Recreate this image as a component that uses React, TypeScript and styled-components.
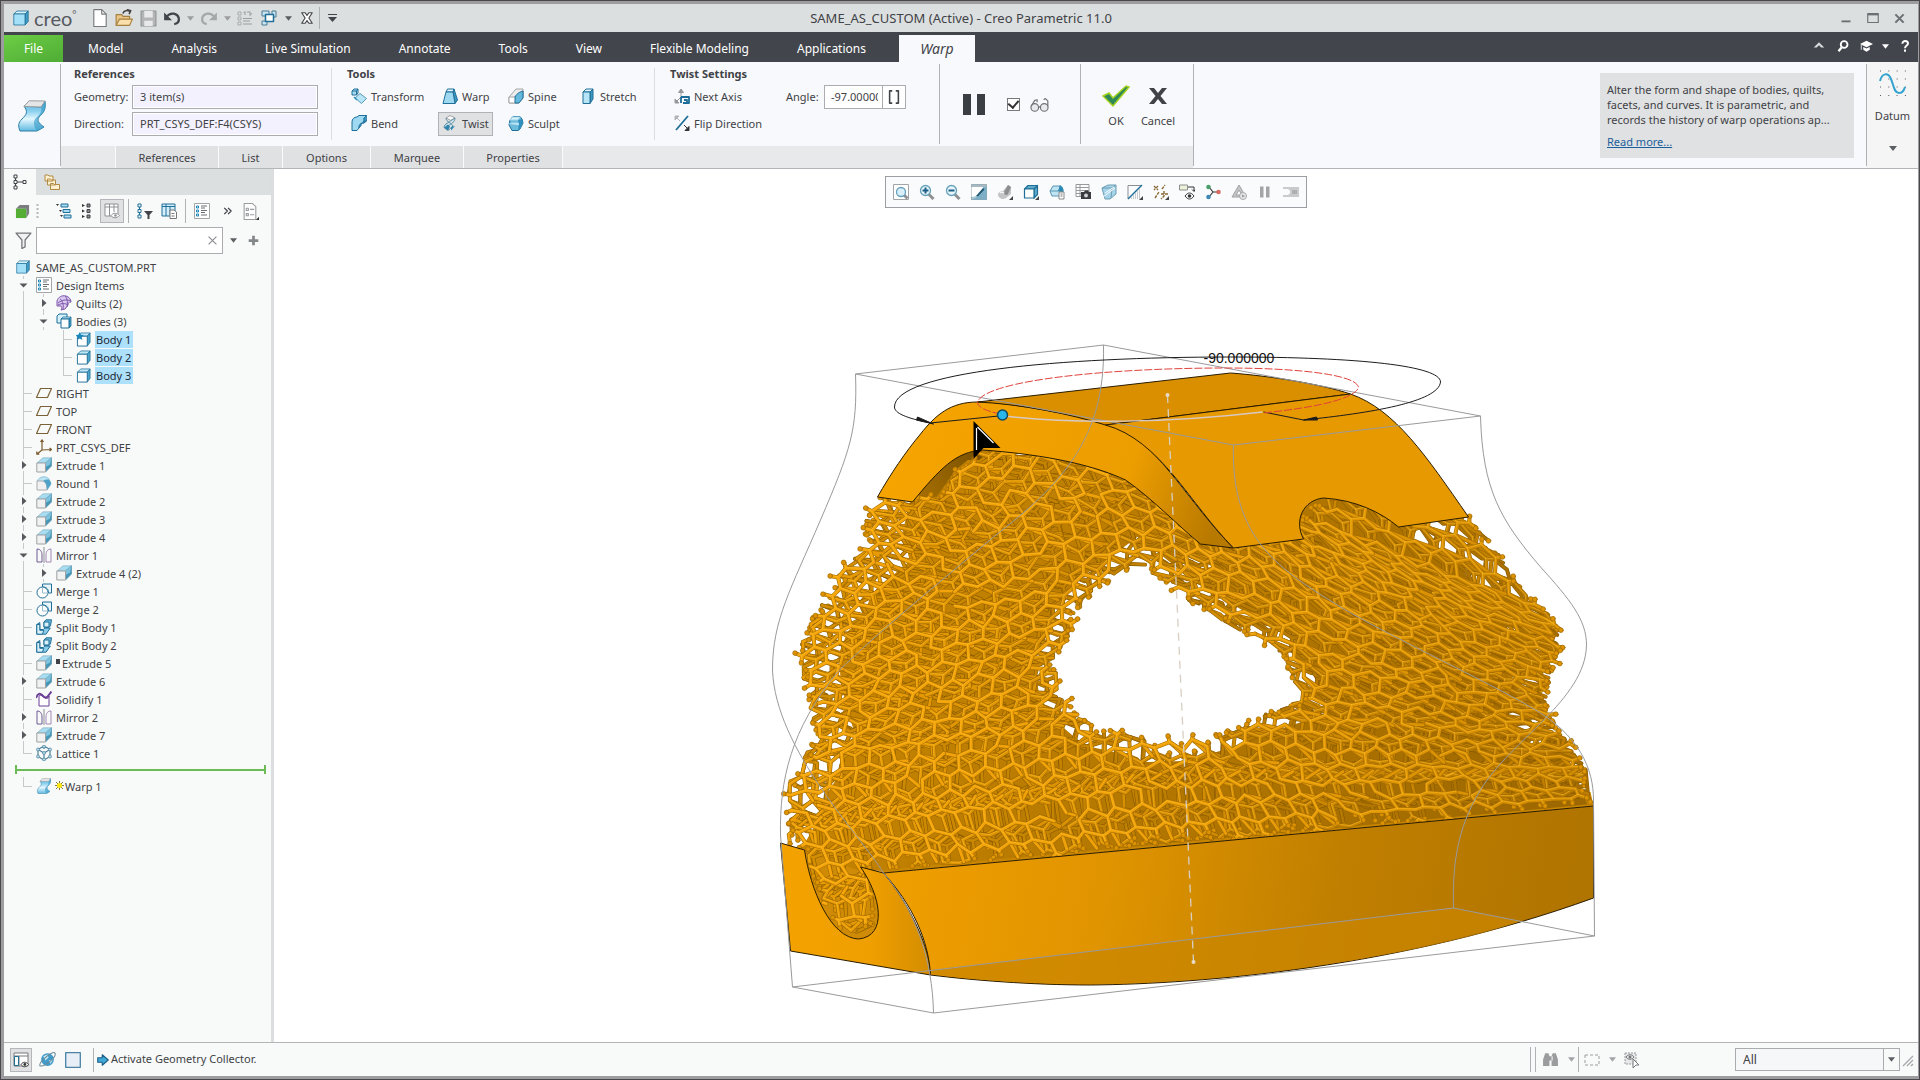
import React from "react";
import styled, { createGlobalStyle, css } from "styled-components";

const Global = createGlobalStyle`
  * { box-sizing: border-box; }
  html, body, #root { height: 100%; margin: 0; }
  body { font-family: "Noto Sans", "Open Sans", sans-serif; font-size: 11px; color: #3f4246; background: #fff; overflow: hidden; }
  button, input, select { font: inherit; color: inherit; }
  button { background: none; border: 0; padding: 0; margin: 0; }
  svg { display: block; flex: none; }
`;

/* ---------- layout ---------- */

const Window = styled.div`
  height: 100vh;
  display: flex;
  flex-direction: column;
  border: 4px solid #9d9c9f;
  border-right-width: 2px;
  outline: 1px solid #4a474c;
  outline-offset: -1px;
`;

const TitleBar = styled.header`
  height: 28px;
  flex: none;
  display: grid;
  grid-template-columns: 1fr auto 1fr;
  align-items: center;
  background: #dcdfe0;
`;

const QuickAccess = styled.div`
  display: flex;
  align-items: center;
  padding-left: 9px;
`;

const Brand = styled.span`
  font-family: "Lato", sans-serif;
  font-size: 20px;
  line-height: 24px;
  width: 59px;
  padding-left: 5px;
  color: #55595f;
`;

const BrandMark = styled.sup`
  font-size: 10px;
  line-height: 10px;
`;

const TitleText = styled.h1`
  margin: 0;
  font-size: 13px;
  font-weight: 400;
  line-height: 20px;
`;

const QuickButton = styled.button<{ $w?: number }>`
  width: ${(p) => p.$w ?? 24}px;
  height: 24px;
  display: flex;
  align-items: center;
  justify-content: center;
`;

const WindowButtons = styled.div`
  display: flex;
  justify-content: flex-end;
  padding-right: 5px;
`;

const TabBar = styled.nav`
  height: 30px;
  flex: none;
  display: flex;
  align-items: flex-end;
  background: #42454c;
`;

const Tab = styled.button<{ $kind?: "file" | "active" }>`
  height: 27px;
  padding: 0 23px;
  color: #fff;
  font-size: 12px;
  line-height: 20px;
  white-space: nowrap;
  & + & { margin-left: 2px; }
  ${(p) => p.$kind === "file" && css`
    background: linear-gradient(160deg, #6cce45, #4fab35);
    width: 59px;
    padding: 0;
  `}
  ${(p) => p.$kind === "active" && css`
    background: #f8f9fc;
    color: #3f4246;
    font-style: italic;
    font-size: 14px;
    width: 76px;
    padding: 0;
    && { margin-left: 10px; }
  `}
`;

const TabTools = styled.div`
  margin-left: auto;
  height: 27px;
  display: flex;
  align-items: center;
  padding: 0 1px 5px 0;
`;

const Ribbon = styled.section`
  height: 107px;
  flex: none;
  display: flex;
  background: #f8f9fc;
  border-bottom: 1px solid #b4b5b8;
`;

const RibbonIcon = styled.div`
  width: 56px;
  display: flex;
  align-items: center;
  justify-content: center;
  padding-top: 1px;
`;

const Divider = styled.span<{ $top?: number; $bottom?: number; $color?: string }>`
  flex: none;
  width: 1px;
  align-self: stretch;
  margin: ${(p) => p.$top ?? 2}px 0 ${(p) => p.$bottom ?? 2}px;
  background: ${(p) => p.$color ?? "#b0b1b5"};
`;

const Spacer = styled.span<{ $w: number }>`
  width: ${(p) => p.$w}px;
  flex: none;
`;

const Dashboard = styled.div`
  display: flex;
  flex-direction: column;
`;

const Groups = styled.div`
  height: 84px;
  display: flex;
`;

const Group = styled.div<{ $left: number; $right: number }>`
  display: flex;
  flex-direction: column;
  gap: 3px;
  padding: 4px ${(p) => p.$right}px 0 ${(p) => p.$left}px;
`;

const GroupTitle = styled.h2`
  margin: 0;
  font-size: 11px;
  line-height: 16px;
  font-weight: 700;
`;

const Row = styled.div`
  display: flex;
  align-items: center;
  height: 24px;
`;

const FieldLabel = styled.label<{ $w: number }>`
  width: ${(p) => p.$w}px;
  padding-bottom: 2px;
`;

const Field = styled.input`
  width: 186px;
  height: 24px;
  border: 1px solid #abacb0;
  background: #f3f1fd;
  box-shadow: inset 0 0 0 1px #fff;
  padding: 0 7px 2px;
  outline: 0;
`;

const ToolGrid = styled.div`
  display: grid;
  grid-template-columns: 91px 66px 72px 64px;
  grid-auto-rows: 24px;
  row-gap: 3px;
  justify-items: start;
`;

const ToolButton = styled.button<{ $on?: boolean; $w?: number }>`
  height: 24px;
  display: flex;
  align-items: center;
  gap: 4px;
  padding: 0 3px 2px;
  white-space: nowrap;
  width: ${(p) => (p.$w ? `${p.$w}px` : "auto")};
  border: 1px solid ${(p) => (p.$on ? "#b1b2b5" : "transparent")};
  background: ${(p) => (p.$on ? "#e0e1e3" : "transparent")};
`;

const AngleBox = styled.span`
  display: flex;
  width: 82px;
  height: 24px;
  border: 1px solid #abacb0;
  background: #fff;
`;

const AngleInput = styled.input`
  flex: 1;
  min-width: 0;
  border: 0;
  padding: 0 4px 2px 6px;
  outline: 0;
`;

const AngleButton = styled.button`
  width: 23px;
  border-left: 1px solid #abacb0;
  display: flex;
  align-items: center;
  justify-content: center;
`;

const Playback = styled.div`
  display: flex;
  align-items: center;
  gap: 10px;
  width: 140px;
  padding-left: 23px;
`;

const CheckInput = styled.input`
  appearance: none;
  width: 13px;
  height: 13px;
  margin: 0 0 0 12px;
  border: 1px solid #77797d;
  background: #fff;
  display: grid;
  place-content: center;
  &:checked::before {
    content: "";
    width: 5px;
    height: 8px;
    border: solid #333;
    border-width: 0 2px 2px 0;
    transform: rotate(40deg);
    margin-bottom: 2px;
  }
`;

const Confirm = styled.div`
  display: flex;
  justify-content: center;
  width: 112px;
`;

const ConfirmButton = styled.button`
  width: 42px;
  display: flex;
  flex-direction: column;
  align-items: center;
  padding-top: 22px;
  gap: 5px;
  line-height: 16px;
`;

const SubTabs = styled.div`
  display: flex;
  height: 22px;
  background: #e8e9eb;
`;

const SubTab = styled.button<{ $w: number }>`
  width: ${(p) => p.$w}px;
  border-right: 1px solid #fafafa;
  background: #e0e1e3;
`;

const SubPad = styled.span`
  width: 55px;
  border-right: 1px solid #fafafa;
`;

const Help = styled.aside`
  width: 254px;
  height: 85px;
  margin: 11px 12px 0 auto;
  padding: 9px 7px;
  background: #e0e1e2;
  line-height: 15px;
`;

const HelpText = styled.p`
  margin: 0 0 7px;
  white-space: nowrap;
`;

const HelpLink = styled.a`
  color: #1b5e9b;
  text-decoration: underline;
`;

const Datum = styled.button`
  width: 51px;
  display: flex;
  flex-direction: column;
  align-items: center;
  background: #f5f5f6;
  padding-top: 8px;
  line-height: 16px;
  gap: 11px;
`;

const Main = styled.main`
  flex: 1;
  min-height: 0;
  display: flex;
`;

const Navigator = styled.aside`
  width: 270px;
  flex: none;
  display: flex;
  flex-direction: column;
  background: #f8faf9;
  border-right: 3px solid #dcdddf;
`;

const NavTabs = styled.div`
  display: flex;
  height: 26px;
  flex: none;
  background: #dcdfe0;
`;

const NavTab = styled.button<{ $on?: boolean }>`
  width: 32px;
  display: flex;
  align-items: center;
  justify-content: center;
  background: ${(p) => (p.$on ? "#f8faf9" : "transparent")};
`;

const NavTools = styled.div`
  display: flex;
  align-items: center;
  height: 32px;
  padding-left: 8px;
`;

const NavButton = styled.button<{ $on?: boolean; $w?: number }>`
  width: ${(p) => p.$w ?? 24}px;
  flex: none;
  height: 24px;
  display: flex;
  align-items: center;
  justify-content: center;
  border: 1px solid ${(p) => (p.$on ? "#b5b6b9" : "transparent")};
  background: ${(p) => (p.$on ? "#e0e1e2" : "transparent")};
`;

const FilterRow = styled.div`
  display: flex;
  align-items: center;
  height: 27px;
  padding-left: 11px;
`;

const FilterBox = styled.div`
  display: flex;
  align-items: center;
  width: 187px;
  height: 27px;
  margin-left: 4px;
  padding-right: 5px;
  border: 1px solid #abacb0;
  background: #fff;
`;

const FilterInput = styled.input`
  flex: 1;
  min-width: 0;
  border: 0;
  background: none;
  outline: 0;
`;

const TreeList = styled.ul<{ $top?: number }>`
  list-style: none;
  margin: ${(p) => p.$top ?? 4}px 0 0;
  padding: 0 0 0 12px;
`;

const TreeRow = styled.li`
  display: flex;
  align-items: center;
  height: 18px;
  line-height: 17px;
`;

const Guide = styled.span<{ $kind: string }>`
  width: 20px;
  height: 18px;
  flex: none;
  display: flex;
  align-items: center;
  padding-left: 3px;
  background-repeat: no-repeat;
  ${(p) => p.$kind === "|" && css`
    background-image: linear-gradient(#c6c8ca, #c6c8ca);
    background-size: 1px 18px;
    background-position: 7px 0;
  `}
  ${(p) => (p.$kind === "T" || p.$kind === "L") && css`
    background-image: linear-gradient(#c6c8ca, #c6c8ca), linear-gradient(#c6c8ca, #c6c8ca);
    background-size: 1px ${p.$kind === "T" ? 18 : 9}px, 9px 1px;
    background-position: 7px 0, 7px 9px;
  `}
  ${(p) => (p.$kind === ">" || p.$kind === "v") && css`
    background-image: linear-gradient(#c6c8ca 3px, transparent 3px, transparent 15px, #c6c8ca 15px);
    background-size: 1px 18px;
    background-position: 7px 0;
  `}
`;

const TreeIcon = styled.span`
  width: 19px;
  flex: none;
`;

const TreeLabel = styled.span<{ $on?: boolean }>`
  padding: 0 2px 0 1px;
  background: ${(p) => (p.$on ? "#ade0fb" : "transparent")};
  color: ${(p) => (p.$on ? "#1d2a36" : "inherit")};
`;

const InsertBar = styled.div`
  height: 9px;
  margin: 3px 5px 3px 11px;
  border: solid #6cbb57;
  border-width: 0 2px;
  background: linear-gradient(#6cbb57, #6cbb57) center / 100% 2px no-repeat;
`;

const Viewport = styled.section`
  flex: 1;
  min-width: 0;
  display: grid;
  background: #fff;
`;

const Scene = styled.svg`
  grid-area: 1 / 1;
  width: 100%;
  height: 100%;
  min-height: 0;
`;

const ViewTools = styled.div`
  grid-area: 1 / 1;
  justify-self: center;
  align-self: start;
  display: flex;
  margin-top: 7px;
  padding: 0 2px;
  border: 1px solid #9c9ea3;
  background: #fafbfd;
`;

const ViewButton = styled.button`
  width: 26px;
  height: 30px;
  display: flex;
  align-items: center;
  justify-content: center;
`;

const StatusBar = styled.footer`
  height: 34px;
  flex: none;
  display: flex;
  align-items: center;
  padding: 0 4px 0 6px;
  border-top: 1px solid #b4b5b8;
  background: #f8faf9;
`;

const StatusText = styled.span`
  padding: 0 0 2px 2px;
  flex: 1;
`;

const SelectBox = styled.div`
  display: flex;
  width: 165px;
  height: 23px;
  margin-left: 90px;
  border: 1px solid #abacb0;
  align-items: center;
`;

const Select = styled.select`
  appearance: none;
  flex: 1;
  height: 21px;
  border: 0;
  border-right: 1px solid #abacb0;
  background: #f6f7f8;
  padding: 0 7px;
  font-size: 12px;
  outline: 0;
`;

const SelectArrow = styled.span`
  width: 15px;
  display: flex;
  justify-content: center;
`;

/* ---------- icons ---------- */

const B = "#1f6f98";
const L = "#a9dcf3";
const G = "#6c6f73";

const Svg = ({ s = 16, children }: { s?: number; children: React.ReactNode }) => (
  <svg width={s} height={s} viewBox="0 0 16 16" fill="none" strokeLinejoin="round" aria-hidden="true">{children}</svg>
);

const Caret = ({ c = "#5b5e62", s = 8 }: { c?: string; s?: number }) => (
  <svg width={s} height="5" viewBox="0 0 8 5" aria-hidden="true"><path d="M0 0h8L4 5z" fill={c} /></svg>
);

const IcCube = ({ s = 16 }) => (
  <Svg s={s}>
    <path d="M.8 4 4 1h11.200l-3.200 3z" fill="#d4f1fc" stroke={B} strokeWidth=".8" />
    <path d="M12 4l3.200-3v10.500L12 15z" fill="#3f9cc4" stroke={B} strokeWidth=".8" />
    <path d="M.8 4H12v11H.8z" fill="#a5e0f9" stroke={B} strokeWidth=".8" />
  </Svg>
);

const IcBody = ({ star = false }) => (
  <Svg s={15}>
    <path d="M1.500 4.500 5 1h10l-3 3.500z" fill="#bfe9f8" stroke={B} strokeWidth=".8" />
    <path d="M12 4.500 15 1v10l-3 4z" fill="#4ba6cb" stroke={B} strokeWidth=".8" />
    <path d="M1.500 4.500H12V15H1.500z" fill="#fff" stroke={B} />
    {star && <path d="M4 0l1.300 2.900 3.200.3-2.400 2.100.7 3.200L4 6.900 1.200 8.500l.7-3.200L-.5 3.200l3.200-.3z" fill="#1b86bb" />}
  </Svg>
);

const IcBodies = () => (
  <Svg>
    <path d="M1 3 3 1h8v9H1z" fill="#d4f1fc" stroke={B} />
    <path d="M5 6l2-2h8l-2 2z" fill="#bfe9f8" stroke={B} strokeWidth=".8" />
    <path d="M13 6l2-2v9l-2 2z" fill="#4ba6cb" stroke={B} strokeWidth=".8" />
    <path d="M5 6h8v9H5z" fill="#fff" stroke={B} />
  </Svg>
);

const IcExtrude = () => (
  <Svg>
    <path d="M1 6 7 .8h8.500L9.500 6z" fill="#a8dcf0" stroke="#7fa8ba" strokeWidth=".6" />
    <path d="M9.500 6l6-5.200V9l-6 6z" fill="#4696b8" stroke="#4c8aa5" strokeWidth=".6" />
    <path d="M9.500 6l6-5.200L14 7.500 9.500 10z" fill="#7fc2dd" />
    <path d="M.8 6h8.700v9H.8z" fill="#f1f1f1" stroke="#9fa1a3" />
  </Svg>
);

const IcRound = () => (
  <Svg>
    <path d="M1 6c3-5 9-5.500 12-2l2 5-4 6" fill="#bde4f3" stroke="#7fb8cf" strokeWidth=".8" />
    <path d="M1 6h6c3 1 4 4 4 9H1z" fill="#f1f1f1" stroke="#aaabad" />
    <path d="M7 6c3 1 4 4 4 9l4-6c0-4-3-6-8-3z" fill="#4fa3c8" />
  </Svg>
);

const IcQuilt = () => (
  <Svg>
    <path d="M1 6c1-4 5-6 9-5 3 1 5 3 5 6-2 0-3 1-3 3l-3 4-4 1c1-2 1-3 0-4L1 11z" fill="#d9c8ee" stroke="#7d55ab" />
    <path d="M2 8c4-3 8-4 13-2M4 4c2 1 4 5 3 10M9 1c2 2 3 5 2 11M2 10c4-2 7-2 10 0" stroke="#7d55ab" />
  </Svg>
);

const IcList = () => (
  <Svg>
    <path d="M.5.500h15v15H.5z" fill="#fff" stroke="#a3a5a8" />
    <path d="M2.500 3h2v2h-2zM2.500 7h2v2h-2zM2.500 11h2v2h-2z" fill="#fff" stroke="#1c86b8" />
    <path d="M7 3h6M7 5h4M7 7.500h6M7 9.500h4M7 12h6" stroke={G} />
  </Svg>
);

const IcPlane = () => (
  <Svg><path d="M4.500 3.500h11l-4 9h-11z" stroke="#7a6137" strokeWidth="1.200" /></Svg>
);

const IcCsys = () => (
  <Svg><path d="M6 1v10l9-.5M6 11l-5 4M4.500 3 6 .8 7.500 3M13.500 9l2 1.500-2 1.500M.8 12.500V15.200h2.500" stroke="#7a5a2c" strokeWidth="1.200" /></Svg>
);

const IcMirror = () => (
  <Svg>
    <path d="M1 15V2c3 0 5 2 5 6v7z" stroke="#6d5a94" />
    <path d="M15 15V2c-3 0-5 2-5 6v7z" stroke="#a487b7" />
    <path d="M8 0v16" stroke="#8b8d92" />
  </Svg>
);

const IcMerge = () => (
  <Svg>
    <path d="M6.500 1h9v9h-3c0-4-2-6-6-6z" fill="#e7f5fb" stroke={B} />
    <circle cx="6.500" cy="9.500" r="5.500" fill="#fff" fillOpacity=".8" stroke={B} />
    <path d="M6.500 4v6H12" stroke="#9dbccb" />
  </Svg>
);

const IcSplit = () => (
  <Svg>
    <path d="M.8 5.500l3-2v7h3.500l1.500-1.500h5.500L10 15.200H.8z" fill="#8accea" stroke={B} />
    <path d="M.8 5.500h3v5.800h4L6.500 15.200H.8z" fill="#d8f0fa" stroke={B} />
    <path d="M8 3l2-2.200h5.500l-1 6-1.500 1.500H8z" fill="#6fbadb" stroke={B} />
    <path d="M8 3h5v5H8z" fill="#d8f0fa" stroke={B} />
  </Svg>
);

const IcSolidify = () => (
  <Svg>
    <path d="M3 15V5c2-2 4 1 6 2s4 0 4-2v10z" fill="#fff" stroke="#6b3f97" />
    <path d="M0 7c2-5 4-5 6-3s4 4 6 1l3.500-4.500" stroke="#6b3f97" strokeWidth="2" />
  </Svg>
);

const IcLattice = () => (
  <Svg>
    <path d="M8 1 2 4.500v7L8 15l6-3.500v-7zM2 4.500 8 8l6-3.500M8 8v7M8 1v3" stroke="#4f8299" strokeWidth="1.200" />
    {[[8, 1.5], [2, 4.5], [14, 4.5], [2, 11.5], [14, 11.5], [8, 14.5], [8, 8]].map(([x, y]) => (
      <circle key={`${x}-${y}`} cx={x} cy={y} r="1.500" fill="#b6dceb" stroke="#4f8299" strokeWidth=".7" />
    ))}
  </Svg>
);

const IcWarpBody = ({ s = 16 }) => (
  <svg width={s} height={s} viewBox="-2 0 32 32" fill="none" aria-hidden="true">
    <defs>
      <linearGradient id="wb" x1="0" y1="0" x2="0" y2="1">
        <stop offset="0" stopColor="#4fb0dc" /><stop offset=".35" stopColor="#8fd2f0" /><stop offset=".6" stopColor="#e4f7ff" /><stop offset="1" stopColor="#5fb9e0" />
      </linearGradient>
    </defs>
    <path d="M6 6C10 12 9 14 4 19 0 23 0 26 2 31H19L26 27C20 23 19 20 21 17 26 12 28 10 27 1L23 7Z" fill="url(#wb)" stroke="#2c7fa6" />
    <path d="M23 7C24 13 21 15 17 19 15 23 16 27 19 31L26 27C20 23 19 20 21 17 26 12 28 10 27 1Z" fill="#3a9cc9" opacity=".65" />
    <path d="M6 6.500 11 .8 27 1 23 7Z" fill="#e4e5e6" stroke="#9b9c9e" />
  </svg>
);

const IcTransform = () => (
  <Svg>
    <path d="M1 3l2-2h4v4L5.500 7H1z" fill={L} stroke={B} />
    <path d="M1 3h4.500v4M5.500 3 7 1" stroke={B} />
    <path d="M4 10l5-4.500 6.500 5L10.500 15.500z" fill="#b7e4f6" stroke="#5b9ab5" />
    <path d="M3 9l3 3" stroke="#2d8fbf" strokeWidth="1.500" />
  </Svg>
);
const IcWarp = () => (
  <Svg>
    <path d="M4 4l1.500-3H12l-1 3z" fill="#e4f6fd" stroke={B} />
    <path d="M11 4l1-3 3.500 11L13 15.500z" fill="#3d97bf" stroke={B} />
    <path d="M4 4h7l2 11.500H1z" fill="#9fd9f1" stroke={B} />
  </Svg>
);
const IcSpine = () => (
  <Svg>
    <path d="M1 9 8 1h7v8l-4 6H1z" fill="#ececec" stroke="#a5a6a8" />
    <path d="M1 9h5c2 0 3-3 6-4l3-2v7l-5 5H1z" fill="#fff" stroke="#a5a6a8" />
    <path d="M7 9c2-4 5-5 8-6v7l-4 5H7z" fill="#66b9dc" stroke={B} />
  </Svg>
);
const IcStretch = () => (
  <Svg>
    <path d="M3 4l3-3h7l-3 3z" fill="#e4f6fd" stroke={B} />
    <path d="M10 4l3-3v10l-3 4.500z" fill="#3d97bf" stroke={B} />
    <path d="M3 4h7v11.500H3z" fill="#b7e4f6" stroke={B} />
  </Svg>
);
const IcBend = () => (
  <Svg>
    <path d="M1 7c0-3 2-5 5-5l2-1.500h7.500L13 3v5c-4 0-5 2-5 5l-2 2.500H1z" fill="#9fd9f1" stroke={B} />
    <path d="M13 8l2.500-2V.5L13 3zM8 13c0-3 1-5 5-5l2.500-2c-4 0-5 2-5.500 5z" fill="#3d97bf" stroke={B} strokeWidth=".7" />
  </Svg>
);
const IcTwist = () => (
  <Svg>
    <path d="M4 3l4-2.500L13 3 9 5.500z" fill="#fff" stroke="#9d9ea0" />
    <path d="M4 3c0 4 6 5 7 8l-5 4.500-4-3c0-4 6-5 7-7l4-2.500c0 4-4 6-7 8" fill="#cfe3ec" stroke="#5d8ba0" />
    <path d="M6 15.500 2 12.500l4-3 2 2zM9 12l4-1-4 4.500z" fill="#2e84ad" />
  </Svg>
);
const IcSculpt = () => (
  <Svg>
    <path d="M5 1.500h7l2 2.500 1 4-3 6-2 1.500H4L1 10l1-5z" fill="#6bbbdc" stroke={B} />
    <path d="M2 5h8l2-3H5zM1 9l3-1h7l1 2" fill="#d8f2fc" stroke="#9fd3e8" />
    <path d="M10 5l4-1 1 4-3 6-2 1 1-6z" fill="#2f8fbd" />
  </Svg>
);
const IcNextAxis = () => (
  <Svg>
    <path d="M7 10V2M4.500 4.500 7 1l2.500 3.500zM6 10 2 14M1 11v4h4z" stroke="#96999c" fill="#96999c" />
    <path d="M7 9h8v6H9M7 9v6M10 12h3v3" stroke="#1b6c98" strokeWidth="1.800" />
  </Svg>
);
const IcFlip = () => (
  <Svg>
    <path d="M2 15 14 1" stroke={B} strokeWidth="1.800" />
    <path d="M1 1h4L1 5zM2 2l4 4" fill="#b1b3b5" stroke="#b1b3b5" />
    <path d="M15 15.500h-4l4-4zM14 14l-4-4" fill="#333" stroke="#333" />
  </Svg>
);
const Funnel = ({ s = 16, c = "#74777a" }) => (
  <Svg s={s}><path d="M1 1h14l-5.500 6.500V14l-3 1.500v-8z" fill="#f2f2f2" stroke={c} strokeWidth="1.200" /></Svg>
);
const Glass = ({ sign = "" }) => (
  <Svg>
    <path d="M9.500 10l5 5" stroke="#8f9193" strokeWidth="3" />
    <circle cx="6.500" cy="6.500" r="5" fill="#e8f6fc" stroke="#64a0b9" strokeWidth="1.300" />
    {sign && <path d={sign === "+" ? "M6.500 3.500v6M3.500 6.500h6" : "M3.500 6.500h6"} stroke="#1b5f86" strokeWidth="2" />}
  </Svg>
);

const viewIcons: [string, React.ReactNode][] = [
  ["Refit", <Svg><path d="M.5.500h15v15H.5z" fill="#fff" stroke="#a2a4a8" /><path d="M10.500 10.500l4 4" stroke="#8f9193" strokeWidth="3" /><circle cx="8" cy="8" r="4.500" fill="#d8effa" stroke="#64a0b9" strokeWidth="1.300" /></Svg>],
  ["Zoom In", <Glass sign="+" />],
  ["Zoom Out", <Glass sign="-" />],
  ["Repaint", <Svg><path d="M.5.500h15v15H.5z" fill="#a9cbd9" stroke="#8fa5b0" /><path d="M.5 3H12c0 5-4 9-11.500 10z" fill="#fff" /><path d="M15.500 3v12.500H1C8 13 12 9 12 3z" fill="#7db0c6" /><path d="M5 12l7-8 1.500 1.500L7 12.500z" fill="#1f5875" /><path d="M.5.500h15V3H.5z" fill="#a7b9c2" /></Svg>],
  ["Shading", <Svg><path d="M1 11c0-3 3-4 5-4l5-6 3 2v7l-5 4c-3 2-7 1-8-3z" fill="#c2c4c6" /><path d="M7 8l4-7 3 2-3 7c-1 2-4 1-4-2z" fill="#8b8d90" /><path d="M3 9c1-1 3-1 4 0" stroke="#f2f2f2" strokeWidth="1.500" /><path d="M16 12v4h-4z" fill="#444" /></Svg>],
  ["Display Style", <Svg><path d="M1.500 5 5 1.500h9.500L11 5zM11 5l3.500-3.500v9L11 14z" fill="#5eabc9" stroke={B} strokeWidth="1.200" /><path d="M1.500 5H11v9H1.500z" fill="#fff" stroke={B} strokeWidth="1.200" /><path d="M16 12v4h-4z" fill="#444" /></Svg>],
  ["Saved Orientations", <Svg><path d="M1 7l3-5h7v10H3z" fill="#bfe5f5" stroke="#5795b0" /><path d="M1 7h9" stroke="#5795b0" /><path d="M11 1c3 2 4 4 3.500 8L9 7z" fill="#2f8ab3" /><path d="M10 8h5v7h-5z" fill="#fff" stroke="#888" /><path d="M11.500 10h2M11.500 12h2" stroke="#777" /></Svg>],
  ["View Manager", <Svg><path d="M1 .5h13v12H1zM1 3.500h13M1 6.500h13M1 9.500h6M5 .5v12" fill="#fff" stroke="#97999c" /><path d="M6 8h3l1-1.500h3L14 8h2v7H6z" fill="#3a3c40" /><circle cx="11" cy="11.500" r="2" fill="#d0d2d5" /></Svg>],
  ["Section", <Svg><path d="M1 4l6-3h8v9l-6 5H4z" fill="#a4d4e9" stroke="#6f9db2" /><path d="M1 4l10 0 4-3M11 4l-1 10" stroke="#6f9db2" /><path d="M2 13 14 4M4 9l9-6" stroke="#fff" /></Svg>],
  ["Datum Display", <Svg><path d="M1 1.500h13M1 1.500v13" stroke="#8b8e92" /><path d="M1 15 15 1" stroke={B} strokeWidth="1.500" /><path d="M4 14h10M6 12h8M8 10h6M10 8h4M12 6h2" stroke="#9a9c9f" strokeDasharray="1 1" /><path d="M16 12v4h-4z" fill="#444" /></Svg>],
  ["Datum Filters", <Svg><path d="M1 2l4 4M5 2 1 6M9 5l3-4M2 14l4-6M8 10h7M11 7v5l-3 3" stroke="#8a6a34" strokeWidth="1.400" strokeDasharray="3 1" /><path d="M16 12v4h-4z" fill="#444" /></Svg>],
  ["Annotation Display", <Svg><path d="M.5 1h8v5h-8z" fill="#eef2d8" stroke="#8b8d90" /><path d="M9 3h6v4M13 5.500l2 2 1-2" stroke="#333" /><path d="M6 12c3-4 6-4 9 0-3 4-6 4-9 0z" fill="#fff" stroke="#333" /><circle cx="10.500" cy="12" r="1.800" fill="#333" /></Svg>],
  ["Spin Center", <Svg><path d="M4 3l4 5-4 5M8 8h6" stroke="#333" strokeWidth="1.200" /><circle cx="3.500" cy="3" r="2.300" fill="#49a06a" /><circle cx="13.500" cy="8" r="2.300" fill="#d86a66" /><circle cx="3.500" cy="13" r="2.300" fill="#3d88b5" /></Svg>],
  ["Simulate", <Svg><path d="M8 1l7 12H1zM8 6l3 5H5z" fill="#c4c5c7" stroke="#a0a2a5" fillRule="evenodd" /><circle cx="12" cy="12" r="3.500" fill="#e5e6e7" stroke="#aaa" /><path d="M11 10.500l3 1.500-3 1.500z" fill="#999" /></Svg>],
  ["Pause", <Svg><path d="M3 2.500h3.500v11H3zM9 2.500h3.500v11H9z" fill="#a3a5a8" /></Svg>],
  ["Stop", <Svg><path d="M0 3h16v10H0V11h5c3-2 3-4 0-6H0z" fill="#c9cacc" /><path d="M9 6h5v4H9z" fill="#adafb1" /></Svg>],
];

/* ---------- tree data ---------- */

type Node = { g: string; icon: React.ReactNode; text: string; on?: boolean; mark?: "square" | "star" };
const ex = <IcExtrude />;
const tree: Node[] = [
  { g: "", icon: <IcCube s={14} />, text: "SAME_AS_CUSTOM.PRT" },
  { g: "v", icon: <IcList />, text: "Design Items" },
  { g: "|>", icon: <IcQuilt />, text: "Quilts (2)" },
  { g: "|v", icon: <IcBodies />, text: "Bodies (3)" },
  { g: "| T", icon: <IcBody star />, text: "Body 1", on: true },
  { g: "| T", icon: <IcBody />, text: "Body 2", on: true },
  { g: "| L", icon: <IcBody />, text: "Body 3", on: true },
  { g: "T", icon: <IcPlane />, text: "RIGHT" },
  { g: "T", icon: <IcPlane />, text: "TOP" },
  { g: "T", icon: <IcPlane />, text: "FRONT" },
  { g: "T", icon: <IcCsys />, text: "PRT_CSYS_DEF" },
  { g: ">", icon: ex, text: "Extrude 1" },
  { g: "T", icon: <IcRound />, text: "Round 1" },
  { g: ">", icon: ex, text: "Extrude 2" },
  { g: ">", icon: ex, text: "Extrude 3" },
  { g: ">", icon: ex, text: "Extrude 4" },
  { g: "v", icon: <IcMirror />, text: "Mirror 1" },
  { g: "|>", icon: ex, text: "Extrude 4 (2)" },
  { g: "T", icon: <IcMerge />, text: "Merge 1" },
  { g: "T", icon: <IcMerge />, text: "Merge 2" },
  { g: "T", icon: <IcSplit />, text: "Split Body 1" },
  { g: "T", icon: <IcSplit />, text: "Split Body 2" },
  { g: "T", icon: ex, text: "Extrude 5", mark: "square" },
  { g: ">", icon: ex, text: "Extrude 6" },
  { g: "T", icon: <IcSolidify />, text: "Solidify 1" },
  { g: ">", icon: <IcMirror />, text: "Mirror 2" },
  { g: ">", icon: ex, text: "Extrude 7" },
  { g: "L", icon: <IcLattice />, text: "Lattice 1" },
];

const Mark = ({ kind }: { kind: "square" | "star" }) =>
  kind === "square" ? (
    <svg width="6" height="11" viewBox="0 0 6 11" aria-hidden="true"><path d="M1 1h4v5H1z" fill="#3f4246" /></svg>
  ) : (
    <svg width="9" height="11" viewBox="0 0 9 11" aria-hidden="true">
      <path d="M4.500 0v9M0 4.500h9M1 1l7 7M8 1 1 8" stroke="#5f5a12" strokeWidth=".8" /><circle cx="4.500" cy="4.500" r="2.500" fill="#ffe60a" />
    </svg>
  );

const TreeItem = ({ n }: { n: Node }) => (
  <TreeRow>
    {n.g.split("").map((k, i) => (
      <Guide key={i} $kind={k}>
        {k === ">" && <svg width="9" height="8" viewBox="0 0 9 8" aria-hidden="true"><path d="M3 0l4.500 4L3 8z" fill="#55585c" /></svg>}
        {k === "v" && <svg width="9" height="8" viewBox="0 0 9 8" aria-hidden="true"><path d="M.5 2.500h8L4.500 6.500z" fill="#55585c" /></svg>}
      </Guide>
    ))}
    <TreeIcon>{n.icon}</TreeIcon>
    {n.mark && <Mark kind={n.mark} />}
    <TreeLabel $on={n.on}>{n.text}</TreeLabel>
  </TreeRow>
);

/* ---------- 3D model ---------- */

type P = [number, number];

const OUTER: P[] = [
  [880, 497], [862, 525], [867, 547], [840, 570], [830, 595], [815, 610], [800, 647], [802, 680], [808, 713], [814, 732],
  [803, 760], [790, 780], [783, 795], [790, 813], [785, 842], [804, 850], [812, 880], [830, 916], [858, 937], [874, 925], [872, 892], [866, 872],
  [883, 870], [1592, 804], [1584, 780], [1586, 765], [1577, 750], [1557, 732], [1545, 703], [1550, 680], [1558, 655], [1557, 623], [1535, 603],
  [1525, 593], [1513, 576], [1490, 543], [1465, 515], [1400, 500], [1323, 490], [1290, 520], [1200, 530], [1143, 485], [1077, 455], [982, 448], [955, 470], [936, 497],
];
const HOLE: P[] = [
  [1137, 562], [1120, 575], [1093, 593], [1073, 613], [1068, 637], [1055, 663], [1058, 690], [1073, 710], [1093, 727], [1120, 733],
  [1150, 742], [1180, 741], [1217, 731], [1263, 714], [1303, 700], [1290, 675], [1276, 645], [1240, 632], [1205, 612], [1175, 592], [1155, 576],
];

const inside = (x: number, y: number, poly: P[]) => {
  let r = false;
  for (let i = 0, j = poly.length - 1; i < poly.length; j = i++) {
    const [xi, yi] = poly[i];
    const [xj, yj] = poly[j];
    if (yi > y !== yj > y && x < ((xj - xi) * (y - yi)) / (yj - yi) + xi) r = !r;
  }
  return r;
};
const solid = (p: P) =>
  p[0] > 780 && p[0] < 1594 && p[1] > 446 && p[1] < 940 && inside(p[0], p[1], OUTER) && !inside(p[0], p[1], HOLE);
const noise = (a: number, b: number) => {
  const v = Math.sin(a * 127.1 + b * 311.7) * 43758.5453;
  return v - Math.floor(v) - 0.5;
};
const clamp = (v: number) => Math.max(0, Math.min(1, v));

const STEP = 13;
const SIDE = 13;
const LAYERS = 5;

function place(i: number, j: number, k: number): P {
  const x0 = 780 + i * STEP + (k % 2) * 7;
  const y0 = 430 + j * SIDE * 1.5 + ((i + j) % 2 ? SIDE * 0.5 : 0) + (k % 2) * 5;
  const t = clamp((y0 - 450) / 400);
  const up = 1 - t;
  const right = clamp((x0 - 1020) / 300);
  const x = x0 + 80 * (t - 0.5) + 22 * Math.sin(t * 6) + noise(i + k, j) * 5;
  const y = y0 - (x0 - 1180) * (0.1 - 0.5 * right * up + 0.1 * (1 - right) * up) + noise(j, i - k) * 5;
  const depth = LAYERS - 1 - k;
  const low = clamp((t - 0.55) * 4);
  const dx = 8 + 3 * right - 4 * low;
  const dy = 1.5 + 3.5 * right * (1 - low) + 6 * low * Math.sin(j * 1.6 + 1);
  return [x + depth * dx, y + depth * dy];
}

const seg = (a: P, b: P) => `M${a[0].toFixed(1)} ${a[1].toFixed(1)}L${b[0].toFixed(1)} ${b[1].toFixed(1)}`;

function buildLattice() {
  const out: { d: string; rungs: string; dots: P[] }[] = [];
  for (let k = 0; k < LAYERS; k++) {
    let d = "";
    let rungs = "";
    const dots: P[] = [];
    for (let i = -12; i < 76; i++) {
      for (let j = -14; j < 36; j++) {
        const a = place(i, j, k);
        const okA = solid(a);
        const next: P[] = [place(i + 1, j, k)];
        if (Math.abs(i + j) % 2) next.push(place(i, j + 1, k));
        next.forEach((b, n) => {
          const okB = solid(b);
          if ((!okA && !okB) || noise(i * 3 + n, j + k * 7) > 0.42) return;
          const mid: P = [(a[0] + b[0]) / 2, (a[1] + b[1]) / 2];
          if (okA && okB) d += seg(a, b);
          else if (solid(mid) || k === LAYERS - 1) {
            d += okA ? seg(a, mid) : seg(b, mid);
            dots.push(mid);
          }
        });
        if (okA && (i + j) % 2 === 0) {
          const depth = LAYERS - 1 - k;
          const c = place(i, j, Math.max(k - 2, 0));
          if (depth >= 0 && k >= 2 && solid(c)) rungs += seg(a, c);
          const e: P = [a[0] + 10, a[1] + 4];
          if (k < 4 && solid(e)) rungs += seg(a, e);
        }
      }
    }
    out.push({ d, rungs, dots });
  }
  return out;
}

const pts = (p: P[]) => p.map((q) => q.join(",")).join(" ");

const STYLE = [
  { edge: "#7f5400", fill: "url(#strutBack)", w: 2.8 },
  { edge: "#875900", fill: "url(#strutBack)", w: 2.8 },
  { edge: "#915f00", fill: "url(#strutMid)", w: 2.8 },
  { edge: "#9a6500", fill: "url(#strutMid)", w: 2.8 },
  { edge: "#a46c00", fill: "url(#strut)", w: 3 },
];

const Lattice = React.memo(() => {
  const layers = React.useMemo(buildLattice, []);
  return (
    <g fill="none" strokeLinecap="round">
      <mask id="core">
        <polygon points={pts(OUTER)} fill="#fff" stroke="#000" strokeWidth="76" />
        <path d="M920 460H1240L1420 520 1380 620 1200 560 1100 540 950 600 900 540z" fill="#fff" />
        <polygon points={pts(HOLE)} fill="#000" stroke="#000" strokeWidth="40" />
        <path d="M830 800 1200 785 1560 740 1590 812 885 880 800 850z" fill="#fff" />
      </mask>
      <polygon points={pts(OUTER)} fill="url(#coreFill)" mask="url(#core)" />
      {layers.map((l, k) => (
        <g key={k}>
          <path d={l.rungs} stroke={STYLE[k].edge} strokeWidth={STYLE[k].w + 1} />
          <path d={l.rungs} stroke={STYLE[k].fill} strokeWidth={STYLE[k].w - 0.2} />
          <path d={l.d} stroke={STYLE[k].edge} strokeWidth={STYLE[k].w + 1.1} />
          <path d={l.d} stroke={STYLE[k].fill} strokeWidth={STYLE[k].w} />
          {k > 2 && <path d={l.d} stroke="#ffbf2a" strokeWidth=".8" opacity=".6" transform="translate(-.5 -.6)" />}
          {l.dots.map((p, i) => (
            <circle key={i} cx={p[0]} cy={p[1]} r="2.400" fill="#dd9200" stroke="#9a6600" strokeWidth=".6" />
          ))}
        </g>
      ))}
    </g>
  );
});

const Model = () => (
  <Scene viewBox="274 169 1643 873" role="img" aria-label="Lattice part being twisted">
    <defs>
      <linearGradient id="coreFill" gradientUnits="userSpaceOnUse" x1="800" y1="500" x2="1590" y2="800">
        <stop offset="0" stopColor="#cc8800" /><stop offset="1" stopColor="#9c6700" />
      </linearGradient>
      <linearGradient id="strut" gradientUnits="userSpaceOnUse" x1="800" y1="0" x2="1590" y2="0">
        <stop offset="0" stopColor="#f5a50a" /><stop offset=".5" stopColor="#eda008" /><stop offset="1" stopColor="#d08a00" />
      </linearGradient>
      <linearGradient id="strutMid" gradientUnits="userSpaceOnUse" x1="800" y1="0" x2="1590" y2="0">
        <stop offset="0" stopColor="#ea9d04" /><stop offset="1" stopColor="#bd7d00" />
      </linearGradient>
      <linearGradient id="strutBack" gradientUnits="userSpaceOnUse" x1="800" y1="0" x2="1590" y2="0">
        <stop offset="0" stopColor="#d48e00" /><stop offset="1" stopColor="#a66e00" />
      </linearGradient>
      <linearGradient id="front" gradientUnits="userSpaceOnUse" x1="900" y1="880" x2="1560" y2="990">
        <stop offset="0" stopColor="#ef9e00" /><stop offset=".3" stopColor="#e09400" /><stop offset=".65" stopColor="#c07f00" /><stop offset="1" stopColor="#b07400" />
      </linearGradient>
      <linearGradient id="side" gradientUnits="userSpaceOnUse" x1="780" y1="900" x2="930" y2="900">
        <stop offset="0" stopColor="#f3a200" /><stop offset=".6" stopColor="#ef9f00" /><stop offset="1" stopColor="#d48d00" />
      </linearGradient>
      <linearGradient id="capLeft" gradientUnits="userSpaceOnUse" x1="900" y1="430" x2="1210" y2="540">
        <stop offset="0" stopColor="#f5a400" /><stop offset=".7" stopColor="#ec9d00" /><stop offset="1" stopColor="#b87900" />
      </linearGradient>
      <linearGradient id="cave" gradientUnits="userSpaceOnUse" x1="920" y1="500" x2="1030" y2="450">
        <stop offset="0" stopColor="#a66e00" /><stop offset=".6" stopColor="#7a5200" /><stop offset="1" stopColor="#8d5f00" />
      </linearGradient>
    </defs>

    <path d="M912 502C930 478 950 452 982 450L1077 463 1010 486Z" fill="url(#cave)" />
    <path d="M1310 500 1347 502 1398 527 1310 530Z" fill="#a06b00" />
    <path d="M804 850 883 873 900 890 870 945 820 930Z" fill="#cf8b05" />
    <path d="M860 862 1590 792 1593 806 883 873Z" fill="#c98600" />
    <Lattice />

    <g stroke="#2a1c00" strokeWidth="1" strokeLinejoin="round">
      <path d="M877 497C890 474 905 452 920 434 935 415 950 402 977 402L987 402C1030 406 1090 418 1120 428 1160 448 1190 505 1233 548L1200 544C1180 528 1150 497 1125 480 1095 466 1050 455 982 450 955 452 940 468 912 502Z" fill="url(#capLeft)" />
      <path d="M977 402 1230 373C1270 376 1320 384 1350 394L1105 425C1070 414 1020 404 977 402Z" fill="#d98f00" />
      <path d="M1105 425 1350 394C1395 410 1425 455 1468 517L1398 527C1380 512 1355 500 1323 498 1303 500 1293 520 1303 539L1233 548C1190 505 1160 440 1105 425Z" fill="#e69900" />
      <path d="M780 843 804 850C810 890 830 938 858 939 888 936 880 895 860 867L883 873C910 905 930 950 930 975L790 951Z" fill="url(#side)" />
      <path d="M883 873 1593 806V898C1400 968 1200 984 1090 985 1030 985 970 980 930 975 928 940 912 905 883 873Z" fill="url(#front)" />
    </g>
    <path d="M931 970 1453 908 1521 921C1400 962 1200 984 1090 984 1030 984 970 980 931 974Z" fill="#c98500" opacity=".75" />

    <g fill="none" stroke="#9a9a9c" strokeWidth="1">
      <path d="M855 374 1103 345 1480 416 1233 445Z" />
      <path d="M792 987 1453 908 1594 936 933 1013Z" />
      <path d="M855 374C857 430 850 450 820 520 790 590 772 620 772 670 775 750 860 835 883 873 915 910 932 960 933 1013" />
      <path d="M1103 345C1105 440 1060 485 993 537 930 590 880 630 837 672 790 730 779 780 780 835L792 987" />
      <path d="M1233 445C1230 540 1280 570 1340 607 1400 642 1480 678 1530 707 1580 735 1593 770 1593 800L1594 936" />
      <path d="M1480 416C1482 490 1500 520 1540 567 1570 600 1586 620 1586 645 1585 700 1510 740 1480 790 1455 830 1452 870 1453 908" />
    </g>

    <g fill="none" stroke="#1c1c1c" strokeWidth="1">
      <path d="M930 423C905 418 894 413 894 407 894 372 1060 357 1230 357 1360 357 1440 366 1440 382 1438 402 1370 413 1303 420L1263 412M930 423 998 416" />
      <path d="M933 424 916 420 917 417ZM1303 420 1316 417 1317 420Z" fill="#1c1c1c" />
    </g>
    <path d="M1000 414C985 411 977 407 977 402 985 380 1110 368 1225 368 1300 368 1358 375 1358 388 1350 402 1300 409 1262 413" fill="none" stroke="#e0423c" strokeWidth="1" strokeDasharray="8 2" />
    <path d="M1004 416C1070 424 1170 423 1262 412" fill="none" stroke="#d9c9c4" strokeWidth="1.500" />
    <path d="M1167 395 1193 962" stroke="#d8cfc4" strokeWidth="1.300" strokeDasharray="8 6" />
    <circle cx="1167" cy="395" r="2" fill="#e8dcc8" /><circle cx="1193" cy="962" r="2" fill="#e8dcc8" />
    <circle cx="1002" cy="415" r="5" fill="#29b6e8" stroke="#0f4a63" strokeWidth="1.500" />
    <text x="1203" y="363" fontFamily="Liberation Sans, sans-serif" fontSize="14" fill="#111">-90.000000</text>
    <path d="M973 421V459L983 448H1000Z" fill="#000" />
    <path d="M976 428V450M977 427 993 443" stroke="#fff" strokeWidth="1.200" />
  </Scene>
);

/* ---------- page ---------- */

const tabs = ["Model", "Analysis", "Live Simulation", "Annotate", "Tools", "View", "Flexible Modeling", "Applications"];

export default function App() {
  return (
    <>
      <Global />
      <Window>
        <TitleBar>
          <QuickAccess>
            <IcCube s={16} />
            <Brand>creo<BrandMark>°</BrandMark></Brand>
            <QuickButton aria-label="New"><Svg s={18}><path d="M2.500.500h7l4 4v11h-11z" fill="#fff" stroke="#77797c" /><path d="M9.500.500v4h4" stroke="#77797c" /></Svg></QuickButton>
            <QuickButton aria-label="Open"><Svg s={18}><path d="M1 14V5h5l1 1.500h6V14z" fill="#e8c588" stroke="#a5803e" /><path d="M1 14.500 4 9h11.500L13 14.500z" fill="#fadfac" stroke="#a5803e" /><path d="M7 4c1-3 4-3 6-2M10.500.500l3.500 1-1.500 3" stroke="#444" strokeWidth="1.400" /></Svg></QuickButton>
            <QuickButton aria-label="Save"><Svg s={17}><path d="M1 1h14v14H1z" fill="#b3b5b7" stroke="#8f9194" /><path d="M4 1h8v6H4zM4 10h8v5H4z" fill="#e8e9ea" /></Svg></QuickButton>
            <QuickButton aria-label="Undo"><Svg s={18}><path d="M3 7c4-5 10-3 11 1 .5 3-1 5-4 5.500" stroke="#414449" strokeWidth="2" /><path d="M1 3v7h7z" fill="#414449" /></Svg></QuickButton>
            <QuickButton $w={13} aria-label="Undo list"><Caret c="#9b9d9f" s={7} /></QuickButton>
            <QuickButton aria-label="Redo"><Svg s={18}><path d="M13 7C9 2 3 4 2 8c-.5 3 1 5 4 5.500" stroke="#a5a7a9" strokeWidth="2" /><path d="M15 3v7H8z" fill="#a5a7a9" /></Svg></QuickButton>
            <QuickButton $w={12} aria-label="Redo list"><Caret c="#9b9d9f" s={7} /></QuickButton>
            <QuickButton aria-label="Regenerate"><Svg><path d="M1 2h3v3H1zM1 7h3v3H1zM1 12h3v3H1z" stroke="#a9abad" /><path d="M6 8.500h9M6 11h7M6 14h9M8 5V1.500L6.500 3M13 1.500v4L15 3M10 2h3" stroke="#9a9c9f" /></Svg></QuickButton>
            <QuickButton aria-label="Windows"><Svg><path d="M1 1h7v5H1zM11 1h4v6h-4zM1 11h5v4H1z" fill="#c9e3f0" stroke="#4a7d95" /><path d="M4.500 4.500h8v7h-8z" fill="#fff" stroke={B} strokeWidth="1.500" /></Svg></QuickButton>
            <QuickButton $w={14} aria-label="Window list"><Caret s={7} /></QuickButton>
            <QuickButton aria-label="Close window"><Svg s={12}><path d="M1 1h4.500L8 4.500 10.500 1H15l-4.500 7L15 15h-4.500L8 11.500 5.500 15H1l4.500-7z" fill="#fff" stroke="#414449" strokeWidth="1.500" /></Svg></QuickButton>
            <Divider $top={1} $bottom={1} />
            <QuickButton aria-label="Customize"><svg width="9" height="8" viewBox="0 0 9 8" aria-hidden="true"><path d="M0 .5h9" stroke="#414449" /><path d="M0 3h9L4.500 8z" fill="#414449" /></svg></QuickButton>
          </QuickAccess>
          <TitleText>SAME_AS_CUSTOM (Active) - Creo Parametric 11.0</TitleText>
          <WindowButtons>
            <QuickButton $w={27} aria-label="Minimize"><Svg s={12}><path d="M2 12.500h12" stroke={G} strokeWidth="2.500" /></Svg></QuickButton>
            <QuickButton $w={27} aria-label="Maximize"><Svg s={12}><path d="M1 2h14v12H1z" stroke={G} strokeWidth="1.500" /><path d="M1 3h14" stroke={G} strokeWidth="3" /></Svg></QuickButton>
            <QuickButton $w={27} aria-label="Close"><Svg s={11}><path d="M2 2l12 12M14 2 2 14" stroke={G} strokeWidth="3" /></Svg></QuickButton>
          </WindowButtons>
        </TitleBar>

        <TabBar>
          <Tab $kind="file">File</Tab>
          {tabs.map((t) => <Tab key={t}>{t}</Tab>)}
          <Tab $kind="active">Warp</Tab>
          <TabTools>
            <QuickButton aria-label="Collapse ribbon"><Svg s={12}><path d="M1 10l7-7 7 7-4 0-3-3-3 3z" fill="#d9dadc" /></Svg></QuickButton>
            <QuickButton aria-label="Search"><Svg s={12}><circle cx="9.500" cy="6" r="4.500" stroke="#fff" strokeWidth="2.500" /><path d="M6 10l-4 5" stroke="#fff" strokeWidth="3" /></Svg></QuickButton>
            <QuickButton $w={23} aria-label="Learning"><Svg s={13}><path d="M0 5l8-4 8 4-8 4zM4 8.500l4 2 4-2V12l-4 2.500L4 12zM1 6h1v6H1z" fill="#fff" /></Svg></QuickButton>
            <QuickButton $w={15} aria-label="Learning list"><Caret c="#fff" s={7} /></QuickButton>
            <QuickButton aria-label="Help"><Svg s={12}><path d="M4.500 5C4.500 0 12 .5 12 4.800 12 7.500 8 7.500 8 11M8 12.500V15.500" stroke="#fff" strokeWidth="2.600" /></Svg></QuickButton>
          </TabTools>
        </TabBar>

        <Ribbon>
          <RibbonIcon><IcWarpBody s={32} /></RibbonIcon>
          <Divider />
          <Dashboard>
            <Groups>
              <Group $left={13} $right={13}>
                <GroupTitle>References</GroupTitle>
                <Row><FieldLabel $w={58} htmlFor="geometry">Geometry:</FieldLabel><Field id="geometry" defaultValue="3 item(s)" /></Row>
                <Row><FieldLabel $w={58} htmlFor="direction">Direction:</FieldLabel><Field id="direction" defaultValue="PRT_CSYS_DEF:F4(CSYS)" /></Row>
              </Group>
              <Divider $top={6} $bottom={6} $color="#dcdde0" />
              <Group $left={15} $right={14}>
                <GroupTitle>Tools</GroupTitle>
                <ToolGrid>
                  <ToolButton><IcTransform />Transform</ToolButton>
                  <ToolButton><IcWarp />Warp</ToolButton>
                  <ToolButton><IcSpine />Spine</ToolButton>
                  <ToolButton><IcStretch />Stretch</ToolButton>
                  <ToolButton><IcBend />Bend</ToolButton>
                  <ToolButton $on><IcTwist />Twist</ToolButton>
                  <ToolButton><IcSculpt />Sculpt</ToolButton>
                </ToolGrid>
              </Group>
              <Divider $top={6} $bottom={6} $color="#dcdde0" />
              <Group $left={15} $right={33}>
                <GroupTitle>Twist Settings</GroupTitle>
                <Row>
                  <ToolButton $w={116}><IcNextAxis />Next Axis</ToolButton>
                  <FieldLabel $w={38} htmlFor="angle">Angle:</FieldLabel>
                  <AngleBox>
                    <AngleInput id="angle" defaultValue="-97.000000" />
                    <AngleButton aria-label="Angle presets"><Svg s={14}><path d="M6 1H3v14h3M10 1h3v14h-3" stroke="#414449" strokeWidth="1.800" /></Svg></AngleButton>
                  </AngleBox>
                </Row>
                <Row><ToolButton $w={116}><IcFlip />Flip Direction</ToolButton></Row>
              </Group>
              <Divider />
              <Playback>
                <button aria-label="Pause"><svg width="22" height="21" viewBox="0 0 22 21" aria-hidden="true"><path d="M0 0h8v21H0zM14 0h8v21h-8z" fill="#3b3e43" /></svg></button>
                <CheckInput type="checkbox" defaultChecked aria-label="Preview" />
                <Svg s={19}><circle cx="4" cy="10.500" r="3.200" stroke="#6f7276" fill="#e9eaeb" /><circle cx="12" cy="10.500" r="3.200" stroke="#6f7276" fill="#e9eaeb" /><path d="M7 10h2M1 9.500l3-5 2-.500v2M15 9.500V5l-2-2-1.500 1" stroke="#6f7276" /></Svg>
              </Playback>
              <Divider />
              <Confirm>
                <ConfirmButton>
                  <svg width="28" height="24" viewBox="0 0 28 24" aria-hidden="true"><path d="M1 12l6-3 4 5L24 2l3 1L11 22z" fill="#2f8a57" stroke="#a6d21e" strokeWidth="1.500" /></svg>
                  OK
                </ConfirmButton>
                <ConfirmButton>
                  <svg width="20" height="24" viewBox="0 0 20 24" aria-hidden="true"><path d="M1 4h5l4 5 4-5h5l-6.500 8L19 20h-5l-4-5-4 5H1l6.500-8z" fill="#3f4246" /></svg>
                  Cancel
                </ConfirmButton>
              </Confirm>
            </Groups>
            <SubTabs>
              <SubPad />
              <SubTab $w={103}>References</SubTab>
              <SubTab $w={64}>List</SubTab>
              <SubTab $w={88}>Options</SubTab>
              <SubTab $w={93}>Marquee</SubTab>
              <SubTab $w={99}>Properties</SubTab>
            </SubTabs>
          </Dashboard>
          <Divider />
          <Help>
            <HelpText>Alter the form and shape of bodies, quilts,<br />facets, and curves. It is parametric, and<br />records the history of warp operations ap...</HelpText>
            <HelpLink href="#more">Read more...</HelpLink>
          </Help>
          <Divider />
          <Datum>
            <svg width="27" height="27" viewBox="0 0 27 27" fill="none" aria-hidden="true">
              <path d="M1 1h26M1 9h26M1 17h26M1 25.500h26" stroke="#55585c" strokeDasharray="1 7.300" />
              <path d="M1 11C3 3 9 2 12 9s3 14 8 14c4 0 5-3 6-6" stroke="#35a3cf" strokeWidth="2" />
            </svg>
            Datum
            <Spacer $w={1} />
            <Caret s={8} />
          </Datum>
        </Ribbon>

        <Main>
          <Navigator>
            <NavTabs>
              <NavTab $on aria-label="Model Tree"><Svg><path d="M2 1h3v3H2zM2 6.500h3v3H2zM2 12h3v3H2zM11 6.500h3v3h-3zM3.500 4v2.500M3.500 9.500V12M5 8h6" stroke="#414449" /></Svg></NavTab>
              <NavTab aria-label="Folder Browser"><Svg><path d="M1 1h3l1 1h4v5H1zM3.500 5h3l1 1h4v5h-8zM6.500 9.500h3l1 1h5v5h-9z" fill="#fff1cf" stroke="#b18a45" /></Svg></NavTab>
            </NavTabs>
            <NavTools>
              <NavButton $w={20} aria-label="Model"><Svg s={15}><path d="M1 5 5 1h10l-3 4zM12 5l3-4v9l-3 5z" fill="#7b7d80" /><path d="M1 5h11v10H1z" fill="#54ad35" /></Svg></NavButton>
              <NavButton $w={10} aria-label="Grip"><svg width="3" height="14" viewBox="0 0 3 14" aria-hidden="true"><path d="M1.500 0v14" stroke="#b5b7b9" strokeWidth="2" strokeDasharray="2 2" /></svg></NavButton>
              <Spacer $w={10} />
              <NavButton aria-label="Expand tree"><Svg><path d="M5 1h7v3H5zM7 6.500h7v3H7zM8 12h7v3H8z" fill={L} stroke={B} /><path d="M0 1h3L1.500 3zM3 7h3L4.500 9zM4 12h3l-1.500 2z" fill="#333" /></Svg></NavButton>
              <NavButton aria-label="Show levels"><Svg><path d="M7 1h3v3H7zM7 6.500h3v3H7zM7 12h3v3H7z" fill="#8b8d90" stroke="#414449" /><path d="M2 1l3 1.500L2 4zM2 6.500l3 1.500-3 1.500zM2 12l3 1.500L2 15z" fill="#333" /></Svg></NavButton>
              <NavButton $on aria-label="Columns"><Svg><path d="M1 1h13v12H1zM1 4h13M5.500 1v12M10 1v8" fill="#fff" stroke="#8f9194" /><path d="M7 12.500c2-3 6-3 8.500 0-2.500 3-6.500 3-8.500 0z" fill="#fff" stroke="#8f9194" /><circle cx="11.500" cy="12.500" r="1.300" fill="#8f9194" /></Svg></NavButton>
              <Spacer $w={4} />
              <Divider $top={4} $bottom={4} />
              <Spacer $w={4} />
              <NavButton aria-label="Tree filters"><Svg><path d="M1 1h3v3H1zM1 6.500h3v3H1zM1 12h3v3H1zM2.500 4v2.500M2.500 9.500V12" stroke={B} /><path d="M7 8h9l-3.500 4v4h-2v-4z" fill="#414449" /></Svg></NavButton>
              <NavButton aria-label="Tree columns"><Svg><path d="M1 1h13v12H1z" fill="#d4effa" stroke={B} /><path d="M1 3.500h13M5 1v12M9 3v9" stroke={B} /><path d="M9 7h4l2.500 2v6.500H9z" fill="#fff" stroke="#777" /><path d="M10.500 10.500h3M10.500 13h3" stroke="#777" /></Svg></NavButton>
              <Spacer $w={4} />
              <Divider $top={4} $bottom={4} />
              <Spacer $w={4} />
              <NavButton aria-label="Design items"><IcList /></NavButton>
              <Spacer $w={4} />
              <NavButton $w={20} aria-label="More">
                <Svg s={10}><path d="M2 3l5 5-5 5M8 3l5 5-5 5" stroke="#414449" strokeWidth="2" /></Svg>
              </NavButton>
              <NavButton aria-label="Settings"><Svg s={17}><path d="M2 .5h8l3 3v12H2z" fill="#fff" stroke="#9a9c9f" /><path d="M4 5h2v2H4zM4 10h2v2H4zM7.500 6h4M7.500 11h4" stroke="#9a9c9f" /><path d="M16 13v3h-3z" fill="#333" /></Svg></NavButton>
            </NavTools>
            <FilterRow>
              <Funnel s={17} />
              <FilterBox>
                <FilterInput aria-label="Tree filter" />
                <button aria-label="Clear"><Svg s={9}><path d="M1 1l14 14M15 1 1 15" stroke="#8b8d90" strokeWidth="2" /></Svg></button>
              </FilterBox>
              <NavButton $w={20} aria-label="Filter history"><Caret s={7} /></NavButton>
              <NavButton $w={20} aria-label="Add filter"><Svg s={11}><path d="M8 1v14M1 8h14" stroke="#85888b" strokeWidth="4" /></Svg></NavButton>
            </FilterRow>
            <TreeList>{tree.map((n) => <TreeItem key={n.text} n={n} />)}</TreeList>
            <InsertBar />
            <TreeList $top={0}>
              <TreeItem n={{ g: "L", icon: <IcWarpBody s={16} />, text: "Warp 1", mark: "star" }} />
            </TreeList>
          </Navigator>

          <Viewport>
            <Model />
            <ViewTools>
              {viewIcons.map(([name, icon]) => <ViewButton key={name} aria-label={name}>{icon}</ViewButton>)}
            </ViewTools>
          </Viewport>
        </Main>

        <StatusBar>
          <NavButton $on $w={22} aria-label="Toggle navigator"><Svg><path d="M1 1h14v13H1zM1 4h14M6 4v10" fill="#fff" stroke="#77797c" /><path d="M1.500 4.500h4v9h-4z" fill="#fff" stroke={B} /><path d="M8 12.500c2-3 5-3 7.500 0-2.500 3-5.500 3-7.500 0z" fill="#fff" stroke="#333" /><circle cx="11.800" cy="12.500" r="1.400" fill="#333" /></Svg></NavButton>
          <NavButton $w={30} aria-label="Browser"><Svg s={17}><circle cx="8" cy="8" r="6" fill="#3f9bca" /><path d="M4 5l4-2 1 3-3 3zM9 9l4-1-2 4z" fill="#c3e6f4" /><path d="M1 14c-2-3 12-15 14-12s-9 13-14 12z" stroke="#6f8a97" /></Svg></NavButton>
          <NavButton $w={22} aria-label="Full screen"><Svg><path d="M.7.700h14.600v14.600H.7z" fill="#e7eef6" stroke="#4a83a6" strokeWidth="1.300" /></Svg></NavButton>
          <Spacer $w={9} />
          <Divider $top={5} $bottom={4} />
          <Spacer $w={3} />
          <Svg s={12}><path d="M1 5h6V1l8 7-8 7v-4H1z" fill="#3fa9d8" stroke="#1b5f86" strokeWidth="1.500" /></Svg>
          <StatusText>Activate Geometry Collector.</StatusText>
          <Divider $top={4} $bottom={4} />
          <Spacer $w={4} />
          <Divider $top={4} $bottom={4} />
          <NavButton $w={28} aria-label="Find"><Svg s={17}><path d="M3 2h3l1 3v9H1V8zM13 2h-3L9 5v9h6V8zM6 5h4v4H6z" fill="#9a9c9e" /></Svg></NavButton>
          <NavButton $w={14} aria-label="Find list"><Caret c="#a3a5a8" s={7} /></NavButton>
          <Divider $top={4} $bottom={4} />
          <NavButton $w={26} aria-label="Box selection"><Svg><path d="M1 3h14v10H1z" stroke="#9a9c9f" strokeDasharray="3 2" /></Svg></NavButton>
          <NavButton $w={14} aria-label="Selection list"><Caret c="#a3a5a8" s={7} /></NavButton>
          <NavButton $w={26} aria-label="Select visible"><Svg><path d="M1 1h11v11H1z" fill="#e6e7e8" stroke="#9a9c9f" strokeDasharray="2 1" /><path d="M2 5c2-3 6-3 8 0-2 3-6 3-8 0z" stroke="#77797c" /><circle cx="6" cy="5" r="1.500" fill="#77797c" /><path d="M9 7l6 6h-3l-3 3z" fill="#fff" stroke="#77797c" /></Svg></NavButton>
          <SelectBox>
            <Select aria-label="Selection filter" defaultValue="All"><option>All</option></Select>
            <SelectArrow><Caret s={7} /></SelectArrow>
          </SelectBox>
          <svg width="14" height="14" viewBox="0 0 14 14" aria-hidden="true"><path d="M3 13 13 3M7 13l6-6M11 13l2-2" stroke="#a5a7aa" strokeWidth="1.300" /></svg>
        </StatusBar>
      </Window>
    </>
  );
}
